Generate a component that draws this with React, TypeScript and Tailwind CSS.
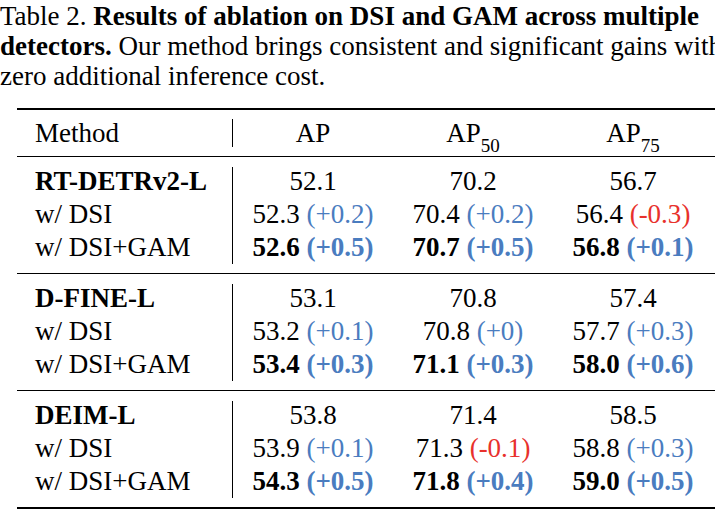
import type { ReactNode } from 'react';

type Cell = [string, string?];

interface Group {
  name: string;
  base: string[];
  dsi: Cell[];
  gam: Cell[];
}

const groups: Group[] = [
  {
    name: 'RT-DETRv2-L',
    base: ['52.1', '70.2', '56.7'],
    dsi: [['52.3', '+0.2'], ['70.4', '+0.2'], ['56.4', '-0.3']],
    gam: [['52.6', '+0.5'], ['70.7', '+0.5'], ['56.8', '+0.1']],
  },
  {
    name: 'D-FINE-L',
    base: ['53.1', '70.8', '57.4'],
    dsi: [['53.2', '+0.1'], ['70.8', '+0'], ['57.7', '+0.3']],
    gam: [['53.4', '+0.3'], ['71.1', '+0.3'], ['58.0', '+0.6']],
  },
  {
    name: 'DEIM-L',
    base: ['53.8', '71.4', '58.5'],
    dsi: [['53.9', '+0.1'], ['71.3', '-0.1'], ['58.8', '+0.3']],
    gam: [['54.3', '+0.5'], ['71.8', '+0.4'], ['59.0', '+0.5']],
  },
];

function Value({ cell, bold }: { cell: Cell; bold?: boolean }) {
  const [v, d] = cell;
  return (
    <span className={bold ? 'font-bold' : ''}>
      {v}
      {d && (
        <>
          {' '}
          <span className={d.startsWith('-') ? 'text-[#e8312c]' : 'text-[#4a7cbf]'}>({d})</span>
        </>
      )}
    </span>
  );
}

function Row({ label, cells, bold }: { label: ReactNode; cells: ReactNode[]; bold?: boolean }) {
  return (
    <div className="flex h-[33px] items-center">
      <div className={`w-[215px] pl-[18px] ${bold ? 'font-bold' : ''}`}>{label}</div>
      <div className="w-px" />
      {cells.map((c, i) => (
        <div key={i} className="w-[160px] text-center whitespace-nowrap">
          {c}
        </div>
      ))}
    </div>
  );
}

export default function App() {
  return (
    <div
      className="w-[715px] h-[516px] overflow-hidden bg-white text-black"
      style={{ fontFamily: '"Liberation Serif", "Times New Roman", serif' }}
    >
      {/* Caption */}
      <div className="text-[27px] leading-[30px] whitespace-nowrap pt-[1px]">
        <div>
          Table 2. <b>Results of ablation on DSI and GAM across multiple</b>
        </div>
        <div>
          <b>detectors.</b> Our method brings consistent and significant gains without
        </div>
        <div>zero additional inference cost.</div>
      </div>

      {/* Table */}
      <div className="ml-[17px] mt-[17px] w-[740px] text-[27px]">
        <div className="h-[2px] bg-black" />
        <div className="flex h-[46px] items-center">
          <div className="w-[215px] pl-[18px]">Method</div>
          <div className="w-px self-stretch bg-black my-[9px]" />
          <div className="w-[160px] text-center">AP</div>
          <div className="w-[160px] text-center">
            AP<sub className="text-[19px] align-[-5px]">50</sub>
          </div>
          <div className="w-[160px] text-center">
            AP<sub className="text-[19px] align-[-5px]">75</sub>
          </div>
        </div>
        <div className="h-px bg-black" />

        {groups.map((g, gi) => (
          <div key={g.name}>
            <div className="flex pt-[8px] pb-[9px]">
              <div className="relative flex-1">
                <div className="absolute left-[215px] top-[2px] bottom-0 w-px bg-black" />
                <Row label={g.name} bold cells={g.base.map((b) => b)} />
                <Row label="w/ DSI" cells={g.dsi.map((c, i) => <Value key={i} cell={c} />)} />
                <Row label="w/ DSI+GAM" cells={g.gam.map((c, i) => <Value key={i} cell={c} bold />)} />
              </div>
            </div>
            <div className={gi === groups.length - 1 ? 'h-[2px] bg-black' : 'h-px bg-black'} />
          </div>
        ))}
      </div>
    </div>
  );
}
